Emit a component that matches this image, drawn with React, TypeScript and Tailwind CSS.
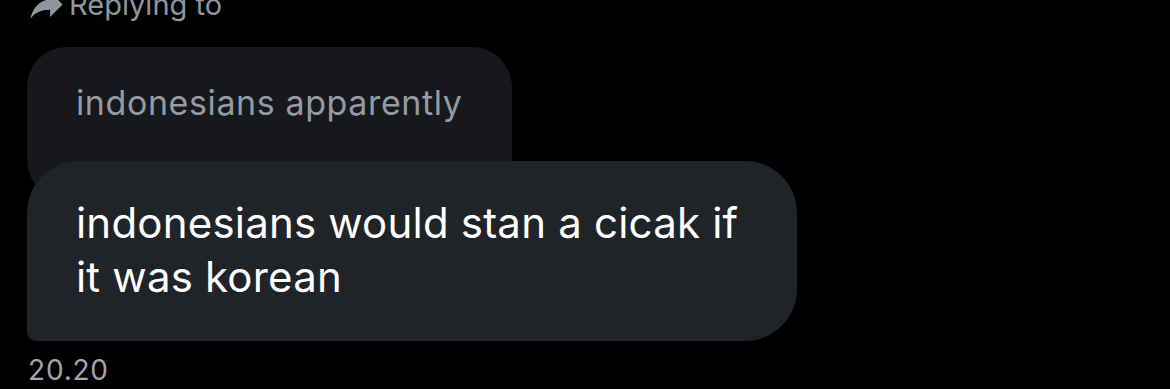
export default function App() {
  return (
    <div className="h-[389px] w-[1170px] overflow-hidden bg-black pl-[27px] font-['Inter','Noto_Sans',sans-serif]">
      {/* replying header, clipped at top */}
      <div className="-mt-[13px] flex h-9 items-start gap-px text-[29px] leading-9 text-[#8e969f]">
        <svg viewBox="0 0 24 24" className="-ml-[2px] -mt-[4px] h-[43px] w-[43px] shrink-0" fill="currentColor">
          <path d="M14 9V5l7 7-7 7v-4.1c-5 0-8.5 1.6-11 5.1 1-5 4-10 11-11z" />
        </svg>
        <span>Replying to</span>
      </div>

      <div className="mt-[24px] flex flex-col items-start">
        {/* quoted message */}
        <div className="h-[153px] w-[485px] rounded-[40px] bg-[#16181c] pl-[49px] pt-[36px]">
          <p className="text-[34px] leading-10 tracking-[0.6px] text-[#959ba2]">indonesians apparently</p>
        </div>

        {/* main message */}
        <div className="relative -mt-[39px] w-[770px] rounded-[52px] rounded-bl-[9px] bg-[#202327] pb-[37px] pl-[49px] pr-[30px] pt-[35px]">
          <p className="text-[42px] leading-[54px] tracking-[0.2px] text-white">
            indonesians would stan a cicak if
            <br />
            it was korean
          </p>
        </div>

        <div className="mt-[13px] pl-px text-[28px] leading-8 tracking-[0.8px] text-[#a0a5ab]">20.20</div>
      </div>
    </div>
  );
}
